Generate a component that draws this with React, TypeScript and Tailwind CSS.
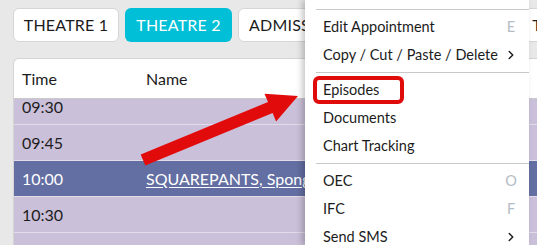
import { ChevronRight } from "lucide-react";

const tabs = [
  { label: "THEATRE 1", width: "w-[106px]", active: false },
  { label: "THEATRE 2", width: "w-[107px]", active: true },
  { label: "ADMISSIONS", width: "w-[122px]", active: false },
  { label: "RECOVERY", width: "w-[149px]", active: false },
  { label: "THEATRE 3", width: "w-[107px]", active: false },
];

const rows = [
  { time: "09:30", name: "" },
  { time: "09:45", name: "" },
  { time: "10:00", name: "SQUAREPANTS, Spongebob", selected: true },
  { time: "10:30", name: "" },
  { time: "10:45", name: "" },
];

type MenuEntry =
  | { type: "sep" }
  | { type: "item"; label: string; shortcut?: string; submenu?: boolean; marked?: boolean };

const menu: MenuEntry[] = [
  { type: "sep" },
  { type: "item", label: "Edit Appointment", shortcut: "E" },
  { type: "item", label: "Copy / Cut / Paste / Delete", submenu: true },
  { type: "sep" },
  { type: "item", label: "Episodes", marked: true },
  { type: "item", label: "Documents" },
  { type: "item", label: "Chart Tracking" },
  { type: "sep" },
  { type: "item", label: "OEC", shortcut: "O" },
  { type: "item", label: "IFC", shortcut: "F" },
  { type: "item", label: "Send SMS", submenu: true },
];

const App = () => {
  return (
    <div className="relative w-[537px] h-[245px] overflow-hidden bg-[#e8e8e8] text-[#1c1c1c] font-['Lato',sans-serif]">
      {/* Tabs */}
      <div className="flex gap-[6px] pl-[13px] pt-[8px] whitespace-nowrap">
        {tabs.map((tab) => (
          <div
            key={tab.label}
            className={`${tab.width} shrink-0 h-[34px] flex items-center justify-center rounded-[6px] text-[16px] tracking-[0.2px] ${
              tab.active
                ? "bg-[#00bfd6] text-white"
                : "bg-white border border-[#d6d6d6]"
            }`}
          >
            {tab.label}
          </div>
        ))}
      </div>

      {/* Schedule table */}
      <div className="ml-[13px] mt-[16px] w-[560px] rounded-tl-[6px] border-l border-t border-[#d4d4d4] overflow-hidden">
        <div className="h-[40px] flex items-center bg-white border-b border-[#c9c9c9] text-[16px]">
          <div className="w-[132px] pl-[8px]">Time</div>
          <div>Name</div>
        </div>
        <div className="h-[160px] overflow-hidden">
          <div className="-mt-[10px]">
            {rows.map((row) => (
              <div
                key={row.time}
                className={`h-[36px] flex items-center border-b border-[#e2dcea] text-[16px] ${
                  row.selected ? "bg-[#636ea2] text-white" : "bg-[#cbc0d9]"
                }`}
              >
                <div className="w-[132px] pl-[8px]">{row.time}</div>
                <div className="underline underline-offset-2 whitespace-nowrap">{row.name}</div>
              </div>
            ))}
          </div>
        </div>
      </div>

      {/* Context menu */}
      <div className="absolute left-[305px] top-0 w-[224px] h-[245px] bg-white shadow-[-3px_0_6px_rgba(0,0,0,0.22)] pt-[6px] text-[14.5px]">
        {menu.map((entry, i) =>
          entry.type === "sep" ? (
            <div key={i} className="my-[3px] ml-[11px] h-px bg-[#c8c8c8]" />
          ) : (
            <div
              key={i}
              className="relative h-[28px] flex items-center justify-between pl-[18px] pr-[11px] whitespace-nowrap"
            >
              <span>{entry.label}</span>
              {entry.shortcut && (
                <span className="text-[#b4bcc4] w-[14px] text-center">{entry.shortcut}</span>
              )}
              {entry.submenu && <ChevronRight className="w-[14px] h-[14px]" strokeWidth={2.5} />}
              {entry.marked && (
                <div className="absolute left-[8px] top-0 w-[91px] h-[28px] border-[4px] border-[#e00c0c] rounded-[6px]" />
              )}
            </div>
          )
        )}
      </div>

      {/* Annotation arrow */}
      <svg className="absolute left-0 top-0 pointer-events-none" width="537" height="245" viewBox="0 0 537 245">
        <polygon
          points="140.7,154.5 268,102.1 264.5,93.8 298,96 276.1,121.4 272.6,113.1 145.3,165.5"
          fill="#e20b0b"
        />
      </svg>
    </div>
  );
};

export default App;
